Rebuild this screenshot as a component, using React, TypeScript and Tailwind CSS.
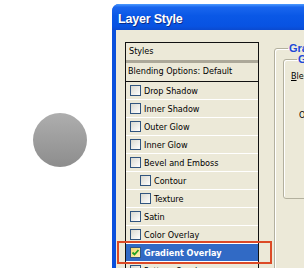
import React from "react";

type Row = { label: string; indent?: boolean; checked?: boolean; selected?: boolean };

const rows: Row[] = [
  { label: "Drop Shadow" },
  { label: "Inner Shadow" },
  { label: "Outer Glow" },
  { label: "Inner Glow" },
  { label: "Bevel and Emboss" },
  { label: "Contour", indent: true },
  { label: "Texture", indent: true },
  { label: "Satin" },
  { label: "Color Overlay" },
  { label: "Gradient Overlay", checked: true, selected: true },
  { label: "Pattern Overlay" },
  { label: "Stroke" },
];

function Checkbox({ checked }: { checked?: boolean }) {
  return (
    <span
      className={
        checked
          ? "w-[11px] h-[11px] shrink-0 border border-[#31557f] bg-[linear-gradient(135deg,#f3d56a,#fff3b8)] flex items-center justify-center"
          : "w-[11px] h-[11px] shrink-0 border border-[#31557f] bg-[linear-gradient(135deg,#d8d8d0,#ffffff)]"
      }
    >
      {checked && (
        <svg width="9" height="9" viewBox="0 0 9 9">
          <path d="M1.5 4.5 L3.5 6.5 L7.5 2" fill="none" stroke="#21a121" strokeWidth="1.8" />
        </svg>
      )}
    </span>
  );
}

export default function App() {
  return (
    <div
      className="w-[304px] h-[268px] overflow-hidden bg-white flex"
      style={{ fontFamily: '"Liberation Sans", Arial, sans-serif' }}
    >
      <div className="w-[112px] shrink-0 pl-[33px] pt-[113px]">
        <div className="w-[54px] h-[54px] rounded-full bg-[linear-gradient(180deg,#aeaeae,#8d8d8d)]" />
      </div>

      <div className="mt-[4px] w-[260px] h-[320px] shrink-0 flex flex-col rounded-tl-[7px] bg-[#0a50dc] overflow-hidden">
        <div className="h-[26px] shrink-0 flex items-center pl-[6px] pt-[4px] bg-[linear-gradient(180deg,#4d9bff_0%,#1a66ee_12%,#0a58e6_45%,#0853e2_85%,#0a4ad0_100%)]">
          <span className="text-white font-bold text-[12.5px] leading-[14px] tracking-[-0.2px] [text-shadow:1px_1px_0_#0a2c8a]">
            Layer Style
          </span>
        </div>

        <div className="flex-1 ml-[4px] bg-[#ece9d8] flex items-start pt-[12px] pl-[9px] gap-[15px]">
          {/* Styles list */}
          <div
            className="w-[134px] shrink-0 border border-[#111] bg-[#ece9d8] text-[9px] text-black [font-stretch:condensed]"
            style={{ fontFamily: '"DejaVu Sans", "Liberation Sans", sans-serif' }}
          >
            <div className="h-[20px] flex items-center pl-[3px] border-b-[3px] border-[#aca899]">Styles</div>
            <div className="h-[19px] flex items-center pl-[2px] border-b border-[#111]">Blending Options: Default</div>
            {rows.map((r) => (
              <div
                key={r.label}
                className={
                  "relative h-[18px] flex items-center gap-[3px] border-b border-white " +
                  (r.indent ? "pl-[14px] " : "pl-[4px] ") +
                  (r.selected ? "bg-[#316ac5] text-white font-bold" : "")
                }
              >
                <Checkbox checked={r.checked} />
                <span className="leading-[12px] whitespace-nowrap">{r.label}</span>
                {r.selected && (
                  <span className="absolute left-[-9px] right-[-14px] top-[-3px] bottom-[-3px] border-2 border-[#dc4a26]" />
                )}
              </div>
            ))}
          </div>

          {/* Right panel */}
          <fieldset className="w-[200px] h-[260px] shrink-0 border border-[#b3b09e] rounded-[3px] shadow-[inset_1px_1px_0_#ffffff] pl-[8px]">
            <legend className="ml-[5px] px-[1px] text-[11px] leading-[13px] font-bold text-[#1d48d8]">
              Gradient Overlay
            </legend>
            <fieldset className="mt-[-2px] h-[146px] border border-[#b3b09e] rounded-[3px] shadow-[inset_1px_1px_0_#ffffff] pl-[7px] pt-[4px]">
              <legend className="ml-[6px] px-[1px] text-[11px] leading-[13px] font-bold text-[#1d48d8]">
                Gradient
              </legend>
              <div
                className="text-[9px] leading-[12px] text-black [font-stretch:condensed]"
                style={{ fontFamily: '"DejaVu Sans", "Liberation Sans", sans-serif' }}
              >
                <span className="underline">B</span>lend Mode:
              </div>
              <div
                className="mt-[27px] ml-[8px] text-[9px] leading-[12px] text-black [font-stretch:condensed]"
                style={{ fontFamily: '"DejaVu Sans", "Liberation Sans", sans-serif' }}
              >
                Opacity:
              </div>
            </fieldset>
          </fieldset>
        </div>
      </div>
    </div>
  );
}
